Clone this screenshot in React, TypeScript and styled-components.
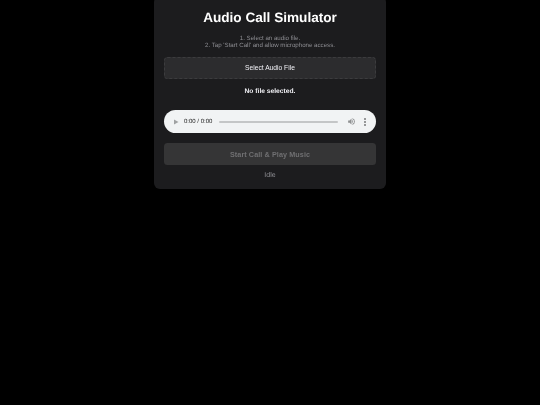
import React from "react";
import styled, { createGlobalStyle } from "styled-components";

const Global = createGlobalStyle`
  html, body { margin: 0; padding: 0; background: #000; }
  body {
    font-family: "Liberation Sans", Arial, sans-serif;
    width: 540px;
    height: 405px;
    overflow: hidden;
    text-rendering: geometricPrecision;
  }
`;

const Page = styled.main`
  display: flex;
  justify-content: center;
  align-items: flex-start;
`;

const Card = styled.section`
  box-sizing: border-box;
  width: 232px;
  height: 193px;
  margin-top: -4px;
  padding: 14px 10px 0;
  background: #1c1c1e;
  border-radius: 6px;
  display: flex;
  flex-direction: column;
  align-items: stretch;
  text-align: center;
  will-change: transform;
`;

const Title = styled.h1`
  margin: 0;
  font-size: 13.6px;
  line-height: 16px;
  font-weight: 700;
  color: #fff;
`;

const Instructions = styled.p`
  margin: 9px 0 0;
  font-size: 6.15px;
  line-height: 7px;
  color: #8e8e93;
`;

const FileButton = styled.button`
  box-sizing: border-box;
  height: 22px;
  margin-top: 8px;
  padding: 0 0 1px;
  font: 400 6.7px "Liberation Sans", Arial, sans-serif;
  color: #f2f2f7;
  background: #2c2c2e;
  border: 0.5px dashed #3c3c3e;
  border-radius: 3.5px;
`;

const FileName = styled.p`
  margin: 8.5px 0 0;
  font-size: 6.7px;
  line-height: 8px;
  font-weight: 700;
  color: #f2f2f7;
`;

const Player = styled.div`
  box-sizing: border-box;
  height: 23px;
  margin-top: 14.5px;
  padding: 0 10px 0 9px;
  display: flex;
  align-items: center;
  background: #f1f3f4;
  border-radius: 11.5px;
`;

const Time = styled.span`
  margin-left: 5px;
  font-size: 6px;
  color: #1f1f1f;
  white-space: nowrap;
`;

const Track = styled.div`
  flex: 1;
  height: 2px;
  margin: 0 9px 0 7px;
  border-radius: 1px;
  background: #c4c6c7;
`;

const Menu = styled.svg`
  margin-left: 8px;
`;

const CallButton = styled.button`
  box-sizing: border-box;
  height: 22px;
  margin-top: 10px;
  padding: 0;
  border: 0;
  border-radius: 3.5px;
  background: #353536;
  color: #707072;
  font: 700 7.2px "Liberation Sans", Arial, sans-serif;
  letter-spacing: 0.1px;
`;

const Status = styled.p`
  margin: 6.5px 0 0;
  font-size: 7px;
  line-height: 8px;
  color: #8e8e93;
`;

export default function App() {
  return (
    <Page>
      <Global />
      <Card>
        <Title>Audio Call Simulator</Title>
        <Instructions>
          1. Select an audio file.
          <br />
          2. Tap 'Start Call' and allow microphone access.
        </Instructions>
        <FileButton type="button">Select Audio File</FileButton>
        <FileName>No file selected.</FileName>
        <Player>
          <svg width="6" height="6" viewBox="0 0 6 6">
            <path d="M1 0.5 L5.5 3 L1 5.5 Z" fill="#a0a2a3" />
          </svg>
          <Time>0:00 / 0:00</Time>
          <Track />
          <svg width="9" height="9" viewBox="0 0 24 24">
            <path
              fill="#8f9192"
              d="M3 9v6h4l5 5V4L7 9H3zm13.5 3A4.5 4.5 0 0 0 14 8v8a4.5 4.5 0 0 0 2.5-4zM14 3.2v2.1a7 7 0 0 1 0 13.4v2.1a9 9 0 0 0 0-17.6z"
            />
          </svg>
          <Menu width="2" height="8" viewBox="0 0 2 8">
            <circle cx="1" cy="1" r="0.8" fill="#222" />
            <circle cx="1" cy="4" r="0.8" fill="#222" />
            <circle cx="1" cy="7" r="0.8" fill="#222" />
          </Menu>
        </Player>
        <CallButton type="button" disabled>
          Start Call &amp; Play Music
        </CallButton>
        <Status>Idle</Status>
      </Card>
    </Page>
  );
}
